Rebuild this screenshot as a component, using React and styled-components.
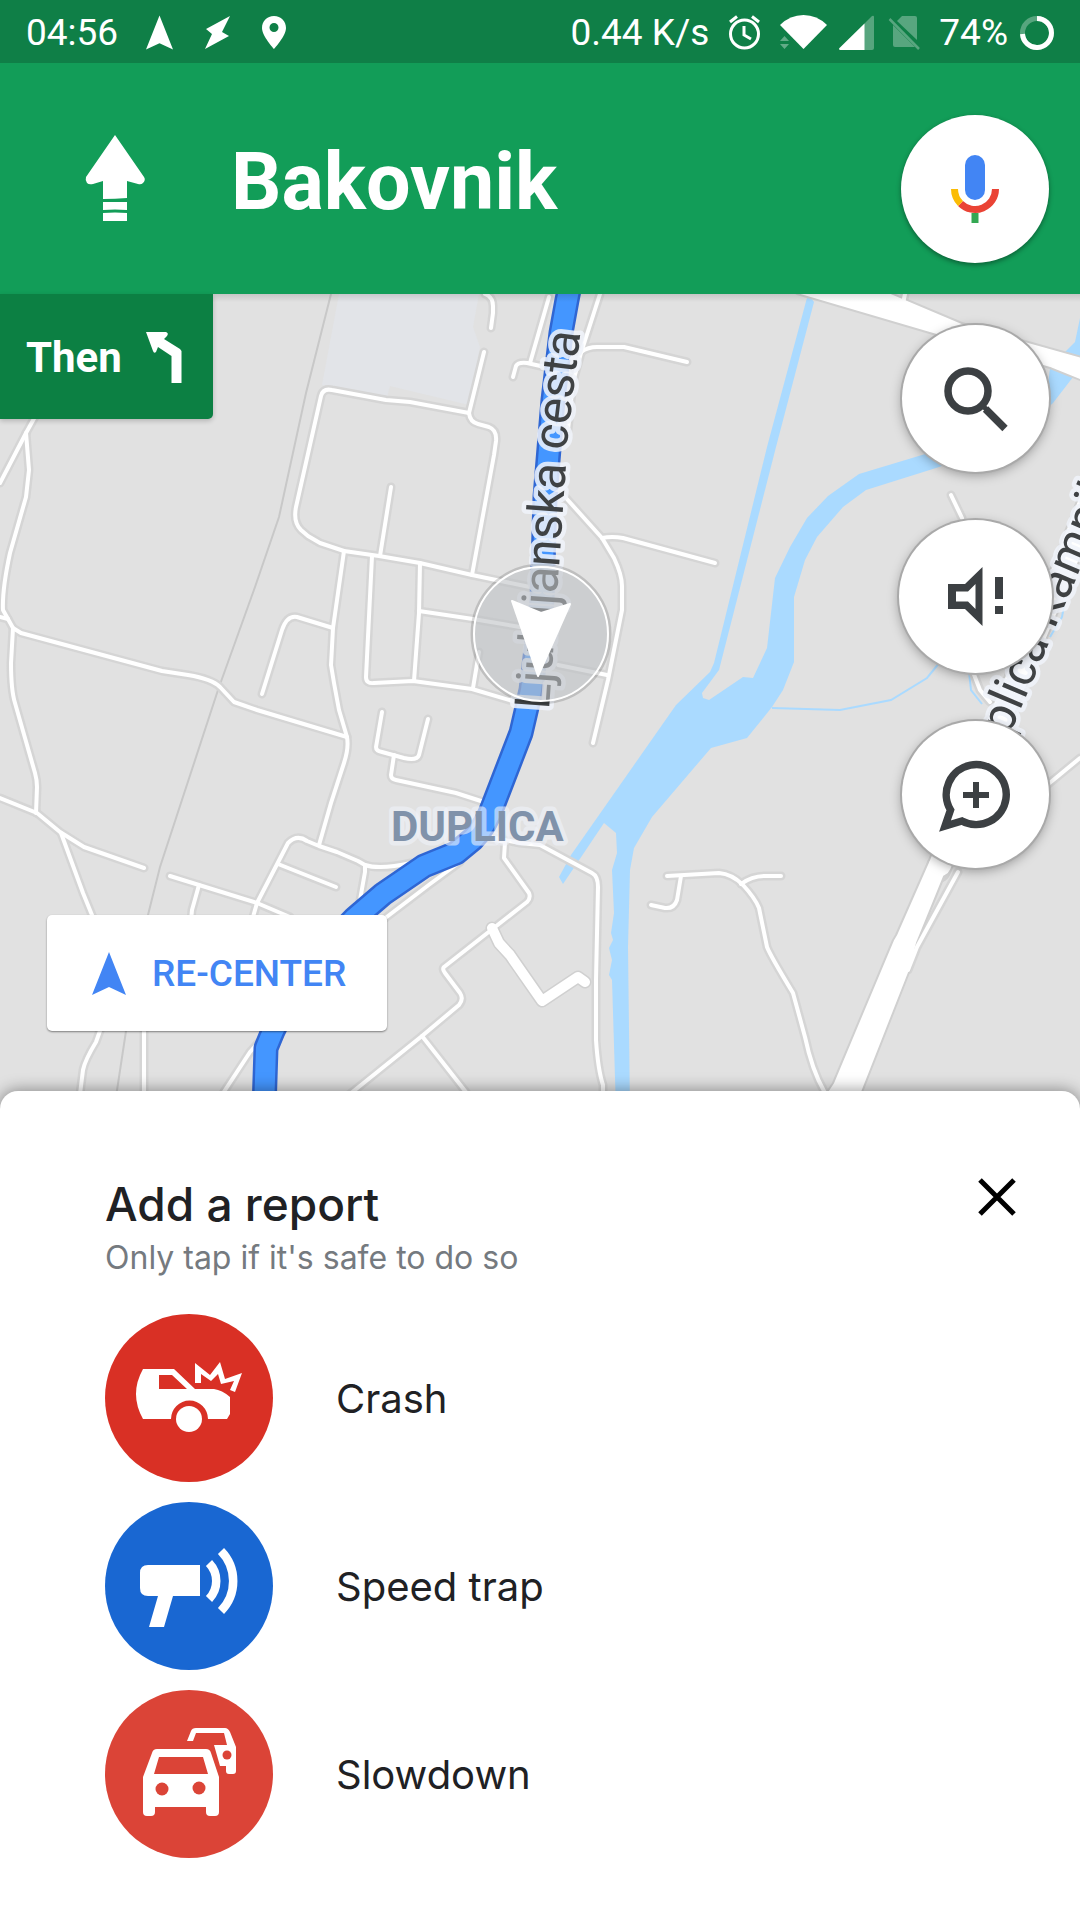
import React from 'react';
import styled, { createGlobalStyle, css } from 'styled-components';

const GlobalStyle = createGlobalStyle`
  * {
    box-sizing: border-box;
  }
  body {
    margin: 0;
    font-family: Roboto, "Liberation Sans", sans-serif;
    background: #fff;
  }
  button {
    border: 0;
    padding: 0;
    font-family: inherit;
    cursor: pointer;
  }
  svg {
    display: block;
    flex: none;
  }
`;

const Screen = styled.div`
  display: flex;
  flex-direction: column;
  min-height: 100vh;
  overflow: hidden;
`;

const StatusBar = styled.div`
  display: flex;
  justify-content: space-between;
  align-items: center;
  height: 63px;
  padding: 0 26px;
  background: #0f7f47;
  color: #fff;
  font-size: 37px;
`;

const StatusGroup = styled.div`
  display: flex;
  align-items: center;
  gap: ${({ gap }) => gap}px;
  line-height: 42px;
  padding-top: 2px;
`;

const Header = styled.header`
  display: flex;
  align-items: center;
  height: 231px;
  padding: 0 31px 0 85px;
  background: #129d58;
  color: #fff;
`;

const Street = styled.h1`
  flex: 1;
  margin: 6px 0 0 84px;
  font-size: 79px;
  line-height: 92px;
  font-weight: 700;
`;

const round = css`
  display: flex;
  align-items: center;
  justify-content: center;
  border-radius: 50%;
  background: #fff;
`;

const MicButton = styled.button`
  ${round}
  width: 148px;
  height: 148px;
  margin-top: 20px;
  box-shadow: 0 2px 5px rgba(0, 0, 0, 0.4);
`;

const MapArea = styled.main`
  position: relative;
  flex: 1;
  display: flex;
  flex-direction: column;
  justify-content: space-between;
  margin-bottom: -18px;
  padding-bottom: 78px;
  background: #e1e1e1;
`;

const MapDrawing = styled.svg`
  position: absolute;
  inset: 0;
  width: 100%;
  height: 100%;
`;

const MapTop = styled.div`
  position: relative;
  display: flex;
  justify-content: space-between;
  align-items: flex-start;
  background: linear-gradient(rgba(0, 0, 0, 0.12), transparent 8px);
`;

const NextTurn = styled.div`
  display: flex;
  align-items: center;
  gap: 24px;
  height: 125px;
  padding: 2px 31px 0 26px;
  border-radius: 0 0 5px 0;
  background: #0c8043;
  color: #fff;
  font-size: 42px;
  font-weight: 700;
  box-shadow: 0 2px 5px rgba(0, 0, 0, 0.2);
`;

const MapControls = styled.div`
  display: flex;
  flex-direction: column;
  align-items: center;
  gap: 48px;
  padding: 31px 28px 0 0;
`;

const MapButton = styled.button`
  ${round}
  width: ${({ $large }) => ($large ? 153 : 147)}px;
  height: ${({ $large }) => ($large ? 153 : 147)}px;
  color: #3c4043;
  box-shadow: 0 0 0 2px #a9a9a9, 0 3px 12px rgba(0, 0, 0, 0.35);
`;

const RecenterButton = styled.button`
  position: relative;
  align-self: flex-start;
  display: flex;
  align-items: center;
  gap: 26px;
  height: 116px;
  margin-left: 47px;
  padding: 0 41px 0 45px;
  border-radius: 5px;
  background: #fff;
  color: #4285f4;
  font-size: 37px;
  font-weight: 500;
  box-shadow: 0 1px 2px rgba(0, 0, 0, 0.45);
`;

const Sheet = styled.section`
  position: relative;
  padding: 81px 62px 62px 105px;
  border-radius: 18px 18px 0 0;
  background: #fff;
  color: #202124;
  font-family: Inter, "Open Sans", sans-serif;
  box-shadow: 0 0 16px 1px rgba(0, 0, 0, 0.4);
`;

const SheetHead = styled.div`
  display: flex;
  justify-content: space-between;
  align-items: flex-start;
  margin-bottom: 34px;
`;

const SheetTitle = styled.h2`
  margin: 0;
  font-size: 46px;
  line-height: 64px;
  font-weight: 500;
`;

const SheetHint = styled.p`
  margin: 0;
  font-size: 32px;
  line-height: 44px;
  color: #757a7f;
`;

const CloseButton = styled.button`
  margin-top: 4px;
  background: none;
  color: #000;
`;

const ReportList = styled.ul`
  display: flex;
  flex-direction: column;
  gap: 20px;
  margin: 0;
  padding: 0;
  list-style: none;
`;

const ReportButton = styled.button`
  display: flex;
  align-items: center;
  gap: 63px;
  width: 100%;
  background: none;
  color: #202124;
  font-size: 40px;
  text-align: left;
`;

const ReportBadge = styled.span`
  border-radius: 50%;
  background: ${({ color }) => color};
  color: ${({ color }) => color};
`;

const RoadName = styled.text`
  font-family: Roboto, sans-serif;
  font-size: 49px;
  fill: #3f4244;
  stroke: rgba(240, 243, 250, 0.85);
  stroke-width: 9px;
  stroke-linejoin: round;
  paint-order: stroke;
`;

const TownName = styled(RoadName)`
  font-size: 42px;
  font-weight: 700;
  fill: #8092aa;
  stroke: rgba(240, 243, 250, 0.6);
`;

// small streets, drawn twice: casing first, then the white line
const streets = [
  'M485 294 Q493 297 493 306 L493 313 L491 328',
  'M484 352 L469 413 Q470 422 478 424 L489 427 Q497 430 496 441 L494 455 L472 575',
  'M469 413 L410 402 L386 400 L332 390 Q323 388 321 396 L296 507 Q293 522 301 530 L308 536 L320 543 L344 551 L379 556 L420 563 L472 575 L530 587',
  'M391 487 L380 556',
  'M344 551 L333 628 L331 665 L334 683 L339 710 L347 737 Q349 748 344 763 L331 803 L319 845',
  'M372 556 L366 677 Q366 684 374 683 L413 681 L472 689 L516 702',
  'M420 563 L419 613 L414 681',
  'M419 611 L473 619 L520 627',
  'M479 652 L473 688',
  'M262 694 L282 630 Q287 615 297 617 L333 628',
  'M36 415 L26 433 L0 483',
  'M26 433 L29 470 L26 497 L10 553 Q2 590 3 610 L13 628 L21 633 L162 671 L188 675 Q212 679 220 687 L234 702 L257 710 L347 737',
  'M0 617 L8 619',
  'M13 628 L11 663 Q11 690 15 703 L35 773 Q37 780 37 787 L36 813',
  'M0 798 L37 813 L60 832 L84 847 L144 868',
  'M61 833 L83 893 L94 920',
  'M101 1028 L96 1042 Q85 1060 83 1070 L78 1110',
  'M144 1028 L144 1110',
  'M170 876 L257 903 L290 917',
  'M199 885 L192 910 L191 920',
  'M253 917 L257 903 L288 843 Q297 834 307 841 L319 846 L337 852 L358 861 L365 865 Q380 870 411 863',
  'M278 864 L336 887',
  'M365 865 L365 872 L360 900',
  'M382 712 L376 747 Q376 751 382 752 L404 758 Q417 761 419 755 L428 719',
  'M394 755 L391 775 Q391 779 396 780 L456 793 L484 802',
  'M485 838 L505 842 L504 858 L529 893 Q531 898 527 902 L444 967 Q442 969 445 973 L460 993 Q464 999 459 1005 L422 1036 L330 1110',
  'M422 1036 L480 1110',
  'M258 1043 L250 1052 L212 1110',
  'M460 862 L430 884 L384 919',
  'M490 837 L520 843 L540 845 L592 873 Q598 876 598 887 L596 980 L596 1040 Q598 1070 603 1085 L603 1110',
  'M600 294 L581 353 L573 382 L568 430',
  'M581 352 Q588 347 597 347 L624 347 L687 362',
  'M562 494 L566 498 L602 538 L614 558 Q622 575 622 586 L622 610 L608 680 L593 743',
  'M602 538 Q612 536 623 538 L715 563',
  'M549 297 L530 363',
  'M513 377 L516 366 Q518 362 527 363 L545 367',
  'M558 665 L607 675',
  'M905 294 L902 308',
  'M951 495 L962 518',
  'M973 672 L980 690 L990 702',
  'M1046 786 L1080 758',
  'M958 872 L917 947 L908 970',
  'M667 876 L719 873 Q732 874 743 885 Q755 898 759 908 L767 947 Q770 955 793 993 L805 1037 Q812 1070 824 1091 L830 1110',
  'M741 884 Q752 876 765 876 L781 876',
  'M681 876 L677 900 Q674 909 665 908 L651 905',
];

const route = 'M571 280 L567 300 L561 333 L553 400 L545 497 L542 600 L531 690 L521 733 L494 803 Q486 826 473 839 L456 853 L424 866 L383 894 L355 918 L300 975 L273 1031 L266 1048 L264 1110';

const StreetMap = () => (
  <MapDrawing viewBox="0 294 1080 815" preserveAspectRatio="xMidYMin slice" fill="none" role="img" aria-label="Map of Duplica">
    <path fill="#e2e4e8" d="M339 294 L479 294 L473 327 L480 347 L469 405 L390 386 L387 397 L322 385 Z" />
    <path stroke="#c8c8c8" strokeWidth="2" d="M331 294 L306 393 L279 517 L255 587 L218 690 L160 867 L148 915 L126 1031 L114 1110" />
    <g fill="#aadaff">
      <path d="M808 294 L767 447 L714 663 L710 672 L676 705 L571 855 L559 877 L563 884 L604 823 L616 833 L617 853 L612 870 L614 913 L611 933 L613 940 L609 948 L612 960 L609 975 L612 980 L616 1110 L630 1110 L628 947 L630 870 L634 848 L652 817 L711 748 L747 738 L772 707 L783 690 L794 662 L794 597 L805 560 L817 537 L843 507 L866 490 L936 468 L990 450 L980 436 L922 455 L859 474 L828 496 L807 518 L790 547 L775 578 L771 613 L767 648 L753 678 L743 677 L709 700 L703 698 L702 693 L719 670 L776 447 L814 302 Z" />
      <path d="M1080 318 L1075 342 L1065 352 L1050 368 L1045 410 L1053 403 L1080 368 Z" />
    </g>
    <path stroke="#aadaff" strokeWidth="2" d="M772 708 L840 710 L891 700 L927 678 L940 662 M969 672 L971 690 L982 704 M1067 590 L1062 617 L1050 637" />
    <g strokeLinecap="round" strokeLinejoin="round">
      <g stroke="#d5d5d5" strokeWidth="9">
        {streets.map((d) => <path key={d} d={d} />)}
      </g>
      <path stroke="#d0d0d0" strokeWidth="13" d="M492 928 L499 943 L510 955 L542 1001 L578 977 L585 982" />
      <path stroke="#d0d0d0" strokeWidth="26" d="M938 870 L997 725 L1062 572 L1100 475" />
      <path fill="#fff" stroke="#d0d0d0" strokeWidth="2" d="M797 294 L780 280 L860 280 L962 323 L1032 343 L1085 358 L1085 382 L1050 368 L933 334 L797 294 Z" />
      <path fill="#fff" stroke="#d0d0d0" strokeWidth="2" d="M929 860 L896 935 L893 940 L833 1083 L815 1110 L855 1110 L910 970 L917 943 L950 862 Z" />
      <g stroke="#fff" strokeWidth="4">
        {streets.map((d) => <path key={d} d={d} />)}
      </g>
      <path stroke="#fff" strokeWidth="10" d="M492 928 L499 943 L510 955 L542 1001 L578 977 L585 982" />
      <path stroke="#fff" strokeWidth="22" d="M940 865 L997 725 L1062 572 L1100 475" />
    </g>
    <path stroke="#2f66d3" strokeWidth="25" strokeLinejoin="round" d={route} />
    <path stroke="#4496ff" strokeWidth="20" strokeLinejoin="round" d={route} />
    <RoadName transform="translate(549 710) rotate(-86)">Ljubljanska</RoadName>
    <RoadName transform="translate(566 451) rotate(-83)">cesta</RoadName>
    <RoadName transform="translate(986 791) rotate(-67)">Duplica Kamnik</RoadName>
    <TownName x="391" y="841">DUPLICA</TownName>
    <circle cx="541" cy="634" r="69" stroke="#000" strokeOpacity=".15" strokeWidth="3" />
    <circle cx="541" cy="634" r="67" fill="#bec1c4" fillOpacity=".6" stroke="#fff" strokeWidth="2" />
    <path fill="#fff" stroke="#fff" strokeWidth="2" strokeLinejoin="round" d="M512 601 L541 613 L570 604 L538 676 Z" />
  </MapDrawing>
);

const NavArrow = ({ width, height }) => (
  <svg width={width} height={height} viewBox="0 0 34 43" fill="currentColor">
    <path d="M17 0 L34 43 L17 35 L0 43 Z" />
  </svg>
);

const BoltIcon = () => (
  <svg width="33" height="35" viewBox="0 0 33 35" fill="#fff">
    <path d="M29 1 L5 14 L11 19 L4 34 L28 21 L21 17 Z" />
  </svg>
);

const PinIcon = () => (
  <svg width="24" height="33" viewBox="0 0 24 33" fill="#fff">
    <path fillRule="evenodd" d="M12 0 C5 0 0 5 0 12 C0 20 12 33 12 33 S24 20 24 12 C24 5 19 0 12 0 Z M12 7 A4.5 4.5 0 1 1 12 16 A4.5 4.5 0 1 1 12 7 Z" />
  </svg>
);

const AlarmIcon = () => (
  <svg width="47" height="35" viewBox="0 0 47 35" fill="none" stroke="#fff" strokeWidth="3">
    <circle cx="23.5" cy="19" r="14" />
    <path d="M23 11 L23 20 L30 24 M9 7 L16 1.500 M38 7 L31 1.500" />
  </svg>
);

const WifiIcon = () => (
  <svg width="47" height="35" viewBox="0 0 47 35" fill="#fff">
    <path d="M0 10 Q10 0 23.500 0 Q37 0 47 10 L23.500 34 Z" />
    <path opacity=".35" d="M0 26 L4.500 21 L9 26 Z M0 29 L9 29 L4.500 34 Z" />
  </svg>
);

const SignalIcon = () => (
  <svg width="35" height="35" viewBox="0 0 35 35" fill="#fff">
    <path opacity=".3" d="M25 9 L33 1 Q35 0 35 2 L35 33 Q35 35 33 35 L25 35 Z" />
    <path d="M25.500 8.500 L25.500 35 L1 35 Q-1 34 1 32.500 Z" />
  </svg>
);

const NoSimIcon = () => (
  <svg width="41" height="35" viewBox="0 0 41 35" fill="#fff" opacity=".3">
    <path d="M11 6 L16 1 L29 1 Q31 1 31 3 L31 25 Z" />
    <path d="M7 10 L29 32 L9 32 Q7 32 7 30 Z" />
    <path stroke="#fff" strokeWidth="2.500" d="M3.500 4 L33 34" />
  </svg>
);

const BatteryRing = () => (
  <svg width="34" height="34" viewBox="0 0 34 34" fill="none" strokeWidth="5">
    <circle cx="17" cy="17" r="14.500" stroke="#fff" opacity=".3" />
    <path stroke="#fff" d="M17 2.500 A14.500 14.500 0 1 1 2.500 18" />
  </svg>
);

const StraightArrow = () => (
  <svg width="62" height="90" viewBox="0 0 62 90" fill="#fff">
    <path d="M30 1 L59 43 Q61 46 58 49 Q56 51 53 50 L42 47 L42 64 Q30 65 18 65 L18 47 L8 50 Q4 51 2 49 Q0 46 1 43 Z" />
    <path d="M18 68 L42 68 L42 76 Q30 75 18 76 Z M18 79 Q30 78 42 79 L42 87 L18 87 Z" />
  </svg>
);

const LeftArrow = () => (
  <svg width="36" height="52" viewBox="0 0 36 52" fill="#fff">
    <path d="M0 0 L20 0 Q23 1 21 4 L18 7 L34 17 L35.500 19 L35.500 51 L25.500 51 L25.500 24 L12 15 L10 20 Q8 22 7 19 Z" />
  </svg>
);

const MicIcon = () => (
  <svg width="48" height="68" viewBox="0 0 48 68" fill="none" strokeWidth="7">
    <rect x="14" y="0" width="20" height="45" rx="10" fill="#4285f4" />
    <path stroke="#ea4335" d="M9.500 48.500 A20.500 20.500 0 0 0 44.500 34" />
    <path stroke="#fbbc05" d="M3.500 34 A20.500 20.500 0 0 0 9.500 48.500" />
    <path stroke="#34a853" d="M24 58 L24 68" />
  </svg>
);

const SearchIcon = () => (
  <svg width="70" height="70" viewBox="0 0 70 70" fill="none" stroke="currentColor">
    <circle cx="27" cy="27" r="20" strokeWidth="7.500" />
    <path strokeWidth="5" d="M40 40 L47 47" />
    <path strokeWidth="7.500" d="M44.500 45 L64 64.500" />
  </svg>
);

const AlertsOnlyIcon = () => (
  <svg width="70" height="70" viewBox="0 0 70 70" fill="currentColor">
    <path fillRule="evenodd" d="M7 22 L24 22 L41.500 5 L41.500 64 L24 47 L7 47 Z M15 29.500 L15 39.500 L27 39.500 L34.500 47 L34.500 22 L27 29.500 Z" />
    <path d="M54 15 H62 V37 H54 Z M54 44 H62 V52 H54 Z" />
  </svg>
);

const AddReportIcon = () => (
  <svg width="70" height="70" viewBox="0 0 70 70" fill="none" stroke="currentColor" overflow="visible">
    <path strokeWidth="7.500" d="M9.500 50 L4 66 L21 61 A30 30 0 1 0 9.500 50 Z" />
    <path strokeWidth="6" d="M35 22 L35 48 M22 35 L48 35" />
  </svg>
);

const CloseIcon = () => (
  <svg width="42" height="42" viewBox="0 0 42 42" fill="none" stroke="currentColor" strokeWidth="5">
    <path d="M4 4 L38 38 M38 4 L4 38" />
  </svg>
);

const CrashIcon = () => (
  <svg width="168" height="168" viewBox="0 0 168 168" fill="#fff">
    <path fillRule="evenodd" d="M38 55 L69 55 L90 75 L109 75 Q117 76 125 83 L125 100 L122 105 L103 105 A18.500 18.500 0 0 0 66 105 L38 105 Q24 80 38 55 Z M54 61 L54 75 L82 75 L67 61 Z" />
    <circle cx="84" cy="105" r="13" />
    <path d="M90 49 L105 61 L115 48 L120 65 L137 59 L130 78 L125 76 L129 67 L116 70 L113 60 L106 67 L96 60 L96 69 L90 69 Z" />
  </svg>
);

const SpeedTrapIcon = () => (
  <svg width="168" height="168" viewBox="0 0 168 168" fill="#fff">
    <path d="M43 63 L95 63 L95 94 L68 94 L59 125 L44 125 L53 94 L43 94 Q35 94 35 86 L35 71 Q35 63 43 63 Z" />
    <g fill="none" stroke="#fff" strokeWidth="8.500">
      <path d="M104 61 A26 26 0 0 1 104 97" />
      <path d="M116 49 A43 43 0 0 1 116 109" />
    </g>
  </svg>
);

const SlowdownIcon = () => (
  <svg width="168" height="168" viewBox="0 0 168 168" fill="#fff">
    <path fillRule="evenodd" d="M52 59 L101 59 Q105 59 106 63 L114 87 L114 122 Q114 126 110 126 L105 126 Q101 126 101 122 L101 117 L50 117 L50 122 Q50 126 46 126 L42 126 Q38 126 38 122 L38 87 L47 63 Q48 59 52 59 Z M54 67 L49 84 L103 84 L98 67 Z" />
    <path d="M82 51 L86 41 Q87 38 91 38 L120 38 Q123 38 125 42 L131 57 L131 81 Q131 84 128 84 L124 84 Q121 84 121 81 L121 76 L115 76 L109 55 L122 55 L119 43 L91 43 L88 51 Z" />
    <g fill="currentColor">
      <circle cx="57" cy="99" r="6.500" />
      <circle cx="94" cy="98" r="6.500" />
      <circle cx="122" cy="65" r="4.500" />
    </g>
  </svg>
);

const reports = [
  { label: 'Crash', color: '#d93025', Icon: CrashIcon },
  { label: 'Speed trap', color: '#1967d2', Icon: SpeedTrapIcon },
  { label: 'Slowdown', color: '#db4437', Icon: SlowdownIcon },
];

const App = () => {
  return (
    <Screen>
      <GlobalStyle />
      <StatusBar>
        <StatusGroup gap={28}>
          <span>04:56</span>
          <NavArrow width={27} height={35} />
          <BoltIcon />
          <PinIcon />
        </StatusGroup>
        <StatusGroup gap={12}>
          <span>0.44 K/s</span>
          <AlarmIcon />
          <WifiIcon />
          <SignalIcon />
          <NoSimIcon />
          <span>74%</span>
          <BatteryRing />
        </StatusGroup>
      </StatusBar>
      <Header>
        <StraightArrow />
        <Street>Bakovnik</Street>
        <MicButton aria-label="Voice search"><MicIcon /></MicButton>
      </Header>
      <MapArea>
        <StreetMap />
        <MapTop>
          <NextTurn>
            <span>Then</span>
            <LeftArrow />
          </NextTurn>
          <MapControls>
            <MapButton aria-label="Search"><SearchIcon /></MapButton>
            <MapButton $large aria-label="Alerts only"><AlertsOnlyIcon /></MapButton>
            <MapButton aria-label="Add a report"><AddReportIcon /></MapButton>
          </MapControls>
        </MapTop>
        <RecenterButton>
          <NavArrow width={34} height={43} />
          <span>RE-CENTER</span>
        </RecenterButton>
      </MapArea>
      <Sheet>
        <SheetHead>
          <div>
            <SheetTitle>Add a report</SheetTitle>
            <SheetHint>Only tap if it's safe to do so</SheetHint>
          </div>
          <CloseButton aria-label="Close"><CloseIcon /></CloseButton>
        </SheetHead>
        <ReportList>
          {reports.map(({ label, color, Icon }) => (
            <li key={label}>
              <ReportButton>
                <ReportBadge color={color}><Icon /></ReportBadge>
                <span>{label}</span>
              </ReportButton>
            </li>
          ))}
        </ReportList>
      </Sheet>
    </Screen>
  );
};

export default App;
